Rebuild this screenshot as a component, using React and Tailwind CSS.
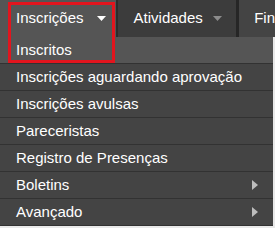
import React from 'react';

const items = [
  { label: 'Inscritos', active: true },
  { label: 'Inscrições aguardando aprovação' },
  { label: 'Inscrições avulsas' },
  { label: 'Pareceristas' },
  { label: 'Registro de Presenças' },
  { label: 'Boletins', sub: true },
  { label: 'Avançado', sub: true },
];

const CaretDown = ({ className }) => (
  <svg width="9" height="5" viewBox="0 0 9 5" className={className}>
    <path d="M0 0 L9 0 L4.5 5 Z" fill="currentColor" />
  </svg>
);

const CaretRight = () => (
  <svg width="6" height="10" viewBox="0 0 6 10" className="text-[#bdbdbd]">
    <path d="M0 0 L6 5 L0 10 Z" fill="currentColor" />
  </svg>
);

const App = () => {
  return (
    <div className="relative w-[275px] h-[228px] overflow-hidden bg-[#e9e9e9] text-white text-[15px] font-['Liberation_Sans',Arial,sans-serif]">
      {/* barra superior */}
      <div className="flex h-[37px] bg-[#3c3c3c]">
        <div className="flex items-center w-[116px] pl-4 bg-[#555555]">
          <span>Inscrições</span>
          <CaretDown className="ml-[13px] text-white" />
        </div>
        <div className="w-[2px] bg-[#2c2c2c]" />
        <div className="flex items-center w-[119px] pl-4">
          <span>Atividades</span>
          <CaretDown className="ml-[10px] text-[#8c8c8c]" />
        </div>
        <div className="w-[3px] bg-[#262626]" />
        <div className="flex items-center flex-1 pl-[15px] bg-[#444444]">
          <span>Fin</span>
        </div>
      </div>

      {/* menu */}
      <div className="w-[273px] bg-[#444444]">
        {items.map((item) => (
          <div
            key={item.label}
            className={`flex items-center justify-between h-[27px] pl-4 pr-[15px] border-b border-[#323232] ${item.active ? 'bg-[#555555]' : 'bg-[#444444]'}`}
          >
            <span>{item.label}</span>
            {item.sub && <CaretRight />}
          </div>
        ))}
      </div>

      {/* destaque vermelho */}
      <div className="absolute left-[8px] top-[2px] w-[107px] h-[61px] border-[3px] border-[#e2151e]" />
    </div>
  );
};

export default App;
